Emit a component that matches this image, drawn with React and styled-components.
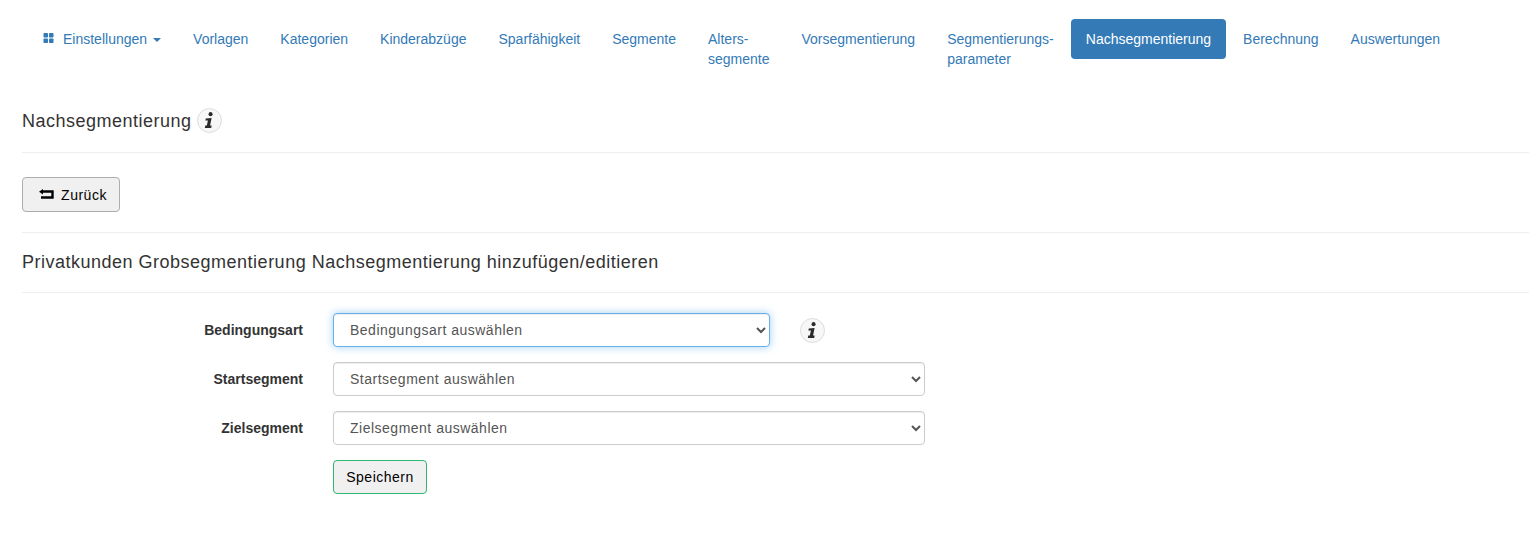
import React from "react";
import styled, { createGlobalStyle } from "styled-components";

const GlobalStyle = createGlobalStyle`
  * { box-sizing: border-box; }
  body {
    margin: 0;
    background: #fff;
    font-family: "Liberation Sans", Arial, sans-serif;
    font-size: 14px;
    line-height: 20px;
    color: #333;
  }
`;

const Page = styled.div`
  padding: 19px 0 0 22px;
  height: 546px;
  overflow: hidden;
`;
const Nav = styled.ul`
  display: flex;
  align-items: flex-start;
  list-style: none;
  margin: 0 0 0 6px;
  padding: 0;
  height: 69px;
`;
const NavItem = styled.li`
  margin-left: ${(p) => (p.$first ? "0" : "2px")};
  flex: none;
`;
const NavLink = styled.a`
  display: block;
  padding: 10px 15px;
  border-radius: 4px;
  color: ${(p) => (p.$active ? "#fff" : "#337ab7")};
  background: ${(p) => (p.$active ? "#337ab7" : "transparent")};
  text-decoration: none;
`;
const Caret = styled.span`
  display: inline-block;
  width: 0;
  height: 0;
  margin-left: 6px;
  vertical-align: middle;
  border-top: 4px solid #337ab7;
  border-left: 4px solid transparent;
  border-right: 4px solid transparent;
`;
const GridIcon = styled.svg`
  width: 11px;
  height: 11px;
  margin-right: 9px;
  fill: #337ab7;
`;
const Heading = styled.h4`
  display: flex;
  align-items: center;
  margin: 0;
  font-size: 18px;
  font-weight: 500;
  line-height: 20px;
  letter-spacing: 0.5px;
  color: #333;
`;
const TitleRow = styled.div`
  padding: 20px 0 19px;
  border-bottom: 1px solid #eee;
`;
const Section = styled.div`
  padding: ${(p) => p.$padding};
  border-bottom: 1px solid #eee;
`;
const InfoBadge = styled.span`
  display: inline-flex;
  align-items: center;
  justify-content: center;
  width: 25px;
  height: 25px;
  margin-left: ${(p) => p.$left || "0"};
  border: 1px solid #ddd;
  border-radius: 50%;
  background: #f7f7f7;
  flex: none;
`;
const InfoGlyph = styled.svg`
  width: 11px;
  height: 17px;
  fill: #2b2b2b;
`;
const Button = styled.button`
  display: inline-flex;
  align-items: center;
  justify-content: center;
  width: ${(p) => p.$width};
  height: ${(p) => p.$height};
  padding: 0;
  border: 1px solid ${(p) => p.$border};
  border-radius: 4px;
  background: #f0f0f0;
  color: #000;
  font: inherit;
  letter-spacing: 0.5px;
`;
const BackIcon = styled.svg`
  width: 16px;
  height: 12px;
  margin: 0 7px 0 3px;
`;
const Form = styled.form`
  padding-top: 20px;
`;
const FormRow = styled.div`
  display: flex;
  align-items: center;
  margin-bottom: 15px;
`;
const Label = styled.label`
  width: 281px;
  margin-right: 30px;
  text-align: right;
  font-weight: 700;
  flex: none;
`;
const Select = styled.select`
  width: ${(p) => p.$width};
  height: 34px;
  padding: 6px 12px;
  border: 1px solid ${(p) => (p.$focused ? "#66afe9" : "#ccc")};
  border-radius: 4px;
  background: #fff;
  color: #555;
  font: inherit;
  letter-spacing: 0.5px;
  outline: none;
  box-shadow: inset 0 1px 1px rgba(0, 0, 0, 0.075)
    ${(p) => (p.$focused ? ", 0 0 8px rgba(102, 175, 233, 0.6)" : "")};
  flex: none;
`;
const Actions = styled.div`
  margin-left: 311px;
`;

const navItems = [
  { label: "Vorlagen" },
  { label: "Kategorien" },
  { label: "Kinderabzüge" },
  { label: "Sparfähigkeit" },
  { label: "Segmente" },
  { label: ["Alters-", "segmente"] },
  { label: "Vorsegmentierung" },
  { label: ["Segmentierungs-", "parameter"] },
  { label: "Nachsegmentierung", active: true },
  { label: "Berechnung" },
  { label: "Auswertungen" },
];

const InfoIcon = ({ left }) => (
  <InfoBadge $left={left}>
    <InfoGlyph viewBox="0 0 10 16">
      <circle cx="6" cy="2" r="1.9" />
      <path d="M1.5 6 L7 5.6 L5.5 12.7 H7 L6.6 15 H0.6 L1 12.7 H2.5 L3.5 8 H1.1 Z" />
    </InfoGlyph>
  </InfoBadge>
);

export default function App() {
  return (
    <Page>
      <GlobalStyle />
      <Nav>
        <NavItem $first>
          <NavLink href="#">
            <GridIcon viewBox="0 0 11 11">
              <rect x="0.5" y="0" width="4.5" height="4.5" rx="0.8" />
              <rect x="6" y="0" width="4.5" height="4.5" rx="0.8" />
              <rect x="0.5" y="5.5" width="4.5" height="4.5" rx="0.8" />
              <rect x="6" y="5.5" width="4.5" height="4.5" rx="0.8" />
            </GridIcon>
            Einstellungen
            <Caret />
          </NavLink>
        </NavItem>
        {navItems.map((item) => (
          <NavItem key={String(item.label)}>
            <NavLink href="#" $active={item.active}>
              {Array.isArray(item.label) ? (
                <>
                  {item.label[0]}
                  <br />
                  {item.label[1]}
                </>
              ) : (
                item.label
              )}
            </NavLink>
          </NavItem>
        ))}
      </Nav>
      <TitleRow>
        <Heading>
          Nachsegmentierung
          <InfoIcon left="5px" />
        </Heading>
      </TitleRow>
      <Section $padding="24px 0 20px">
        <Button type="button" $width="98px" $height="35px" $border="#adadad">
          <BackIcon viewBox="0 0 16 12">
            <path
              d="M4 2.5 H14.5 V8.5 H3"
              fill="none"
              stroke="#000"
              strokeWidth="2.4"
            />
            <path d="M5 0 V5.5 L1 2.7 Z" fill="#000" />
          </BackIcon>
          Zurück
        </Button>
      </Section>
      <Section $padding="19px 0 20px">
        <Heading>Privatkunden Grobsegmentierung Nachsegmentierung hinzufügen/editieren</Heading>
      </Section>
      <Form>
        <FormRow>
          <Label>Bedingungsart</Label>
          <Select $width="437px" $focused defaultValue="">
            <option value="">Bedingungsart auswählen</option>
          </Select>
          <InfoIcon left="30px" />
        </FormRow>
        <FormRow>
          <Label>Startsegment</Label>
          <Select $width="592px" defaultValue="">
            <option value="">Startsegment auswählen</option>
          </Select>
        </FormRow>
        <FormRow>
          <Label>Zielsegment</Label>
          <Select $width="592px" defaultValue="">
            <option value="">Zielsegment auswählen</option>
          </Select>
        </FormRow>
        <Actions>
          <Button type="button" $width="94px" $height="34px" $border="#2eb872">
            Speichern
          </Button>
        </Actions>
      </Form>
    </Page>
  );
}
